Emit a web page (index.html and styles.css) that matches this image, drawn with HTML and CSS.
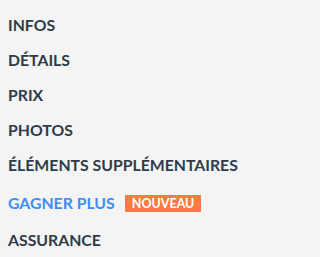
FILE: index.html
```html
<!DOCTYPE html>
<html lang="fr">
<head>
<meta charset="utf-8">
<link rel="stylesheet" href="styles.css">
</head>
<body>
<ul class="menu">
  <li class="item">INFOS</li>
  <li class="item">DÉTAILS</li>
  <li class="item">PRIX</li>
  <li class="item">PHOTOS</li>
  <li class="item">ÉLÉMENTS SUPPLÉMENTAIRES</li>
  <li class="item item-new"><span class="link-blue">GAGNER PLUS</span><span class="badge">NOUVEAU</span></li>
  <li class="item">ASSURANCE</li>
</ul>
</body>
</html>
```

FILE: styles.css
```css
html, body {
  margin: 0;
  padding: 0;
  background: #f4f4f4;
}
.menu {
  list-style: none;
  margin: 0;
  padding: 7px 0 0 8px;
  font-family: Lato, "Noto Sans", sans-serif;
  font-weight: 700;
  font-size: 15.8px;
  color: #2f3b4a;
}
.item {
  display: flex;
  align-items: center;
  height: 35px;
  white-space: nowrap;
}
.item-new {
  height: 40px;
}
.link-blue {
  color: #3b8df7;
}
.badge {
  margin-left: 10px;
  background: #ff7944;
  color: #fff;
  font-size: 12.5px;
  height: 17px;
  line-height: 17px;
  padding: 0 7px;
  margin-top: 2px;
}
```
